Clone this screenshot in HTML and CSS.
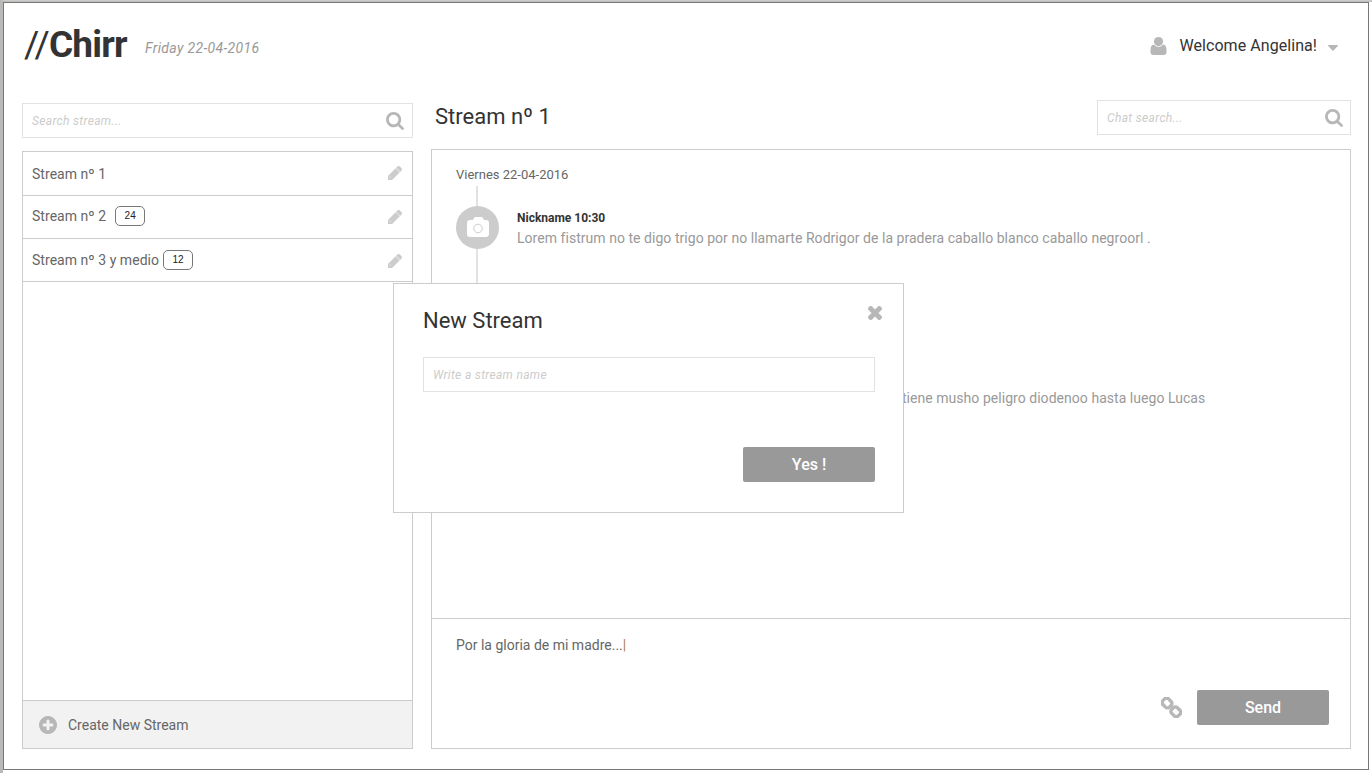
FILE: index.html
```html
<!DOCTYPE html>
<html lang="en">
<head>
<meta charset="utf-8">
<title>//Chirr</title>
<link rel="stylesheet" href="styles.css">
</head>
<body>
<svg class="sprite" width="0" height="0">
  <symbol id="search" viewBox="64 128 1664 1664"><path d="M1216 832q0-185-131.500-316.500t-316.500-131.500-316.500 131.500-131.500 316.500 131.500 316.500 316.500 131.500 316.500-131.500 131.500-316.500zm512 832q0 52-38 90t-90 38q-54 0-90-38l-343-342q-179 124-399 124-143 0-273.500-55.500t-225-150-150-225-55.500-273.500 55.500-273.500 150-225 225-150 273.500-55.500 273.500 55.500 225 150 150 225 55.500 273.500q0 220-124 399l343 343q37 37 37 90z"/></symbol>
  <symbol id="pencil" viewBox="128 149 1515 1515"><path stroke="#ccc" stroke-width="50" d="M430 1475l60-60-150-150-60 60v50h100v100zM960 416l416 416-832 832h-416v-416zm683 96q0 53-37 90l-166 166-416-416 166-165q36-38 90-38 53 0 91 38l235 234q37 39 37 91z"/></symbol>
</svg>
<div class="app">
  <header class="header">
    <h1 class="logo"><span class="slashes">//</span>Chirr</h1>
    <span class="today">Friday 22-04-2016</span>
    <div class="user">
      <svg class="user-icon" viewBox="0 0 16 18"><circle cx="8" cy="4.600" r="4.600"/><path d="M3.400 7.600Q0 8 0 13v2q0 3 3 3h10q3 0 3-3v-2q0-5-3.400-5.400Q11 10 8 10T3.400 7.600z"/></svg>
      <span class="welcome">Welcome Angelina!</span>
      <svg class="caret" viewBox="0 0 10 6"><path d="M.6 0h8.800q1 .4.400 1L5.600 5.600q-.6.500-1.200 0L.2 1Q-.4.400.6 0z"/></svg>
    </div>
  </header>
  <div class="columns">
    <aside class="sidebar">
      <div class="field stream-search"><span>Search stream...</span><svg class="search-icon"><use href="#search"/></svg></div>
      <div class="streams">
        <div class="stream first"><span>Stream nº 1</span><svg class="pencil"><use href="#pencil"/></svg></div>
        <div class="stream second"><span>Stream nº 2</span><span class="badge spaced">24</span><svg class="pencil"><use href="#pencil"/></svg></div>
        <div class="stream third"><span>Stream nº 3 y medio</span><span class="badge">12</span><svg class="pencil"><use href="#pencil"/></svg></div>
        <div class="create">
          <svg class="plus" viewBox="128 128 1536 1536"><path d="M1344 960v-128q0-26-19-45t-45-19h-256v-256q0-26-19-45t-45-19h-128q-26 0-45 19t-19 45v256h-256q-26 0-45 19t-19 45v128q0 26 19 45t45 19h256v256q0 26 19 45t45 19h128q26 0 45-19t19-45v-256h256q26 0 45-19t19-45zm320-64q0 209-103 385.500t-279.500 279.500-385.500 103-385.500-103-279.500-279.500-103-385.500 103-385.500 279.500-279.500 385.500-103 385.500 103 279.500 279.500 103 385.500z"/></svg>
          <span>Create New Stream</span>
        </div>
      </div>
    </aside>
    <main class="main">
      <div class="main-head">
        <h2 class="title">Stream nº 1</h2>
        <div class="field chat-search"><span>Chat search...</span><svg class="search-icon"><use href="#search"/></svg></div>
      </div>
      <div class="chat">
        <div class="messages">
          <div class="day">Viernes 22-04-2016</div>
          <div class="message">
            <div class="rail">
              <div class="avatar"><svg class="camera" viewBox="0 0 22 20"><path fill="#fff" d="M3 3h3l1.200-2.200Q7.700 0 8.500 0h6q.8 0 1.200.800L17 3h2q3 0 3 3v11q0 3-3 3H3q-3 0-3-3V6q0-3 3-3z"/><circle cx="11" cy="11.500" r="4.300" fill="none" stroke="#ccc" stroke-width="1"/></svg></div>
            </div>
            <div class="body">
              <div class="nick">Nickname 10:30</div>
              <p class="text">Lorem fistrum no te digo trigo por no llamarte Rodrigor de la pradera caballo blanco caballo negroorl .</p>
            </div>
          </div>
          <p class="text later">tiene musho peligro diodenoo hasta luego Lucas</p>
        </div>
        <div class="composer">
          <div class="draft">Por la gloria de mi madre...<span class="cursor">|</span></div>
          <div class="actions">
            <svg class="link" viewBox="0 0 21 21"><g fill="none" stroke="#b7b7b7" stroke-width="3.400"><rect x="-4.600" y="-4" width="9.200" height="8" rx="2.800" transform="translate(6 6) rotate(45)"/><rect x="-4.600" y="-4" width="9.200" height="8" rx="2.800" transform="translate(14.800 14.800) rotate(45)"/></g></svg>
            <button class="button">Send</button>
          </div>
        </div>
      </div>
    </main>
  </div>
</div>
<div class="dialog">
  <div class="dialog-head">
    <h2 class="title">New Stream</h2>
    <svg class="close" viewBox="302 302 1188 1188"><path stroke="#b7b7b7" stroke-width="50" d="M1490 1258q0 40-28 68l-136 136q-28 28-68 28t-68-28l-294-294-294 294q-28 28-68 28t-68-28l-136-136q-28-28-28-68t28-68l294-294-294-294q-28-28-28-68t28-68l136-136q28-28 68-28t68 28l294 294 294-294q28-28 68-28t68 28l136 136q28 28 28 68t-28 68l-294 294 294 294q28 28 28 68z"/></svg>
  </div>
  <div class="field"><span>Write a stream name</span></div>
  <button class="button">Yes !</button>
</div>
</body>
</html>
```
FILE: styles.css
```css
* { box-sizing: border-box; }
body {
  margin: 0;
  height: 773px;
  overflow: hidden;
  padding: 2px 3px 3px;
  background: linear-gradient(#b9b9b7, #b9b9b7) 0 0 / 3px 100% no-repeat,
    linear-gradient(#cfcfcd, #b9b9b7) 0 0 / 100% 2px no-repeat, #fff;
  font-family: Roboto, "Liberation Sans", sans-serif;
  font-size: 14px;
  line-height: 20px;
  color: #666;
  white-space: nowrap;
}
svg { display: block; fill: #b7b7b7; flex: none; }
.sprite { position: absolute; }
h1, h2, p { margin: 0; font-weight: 400; }
.app {
  width: 1366px;
  height: 768px;
  border: 1px solid #777;
  background: #fff;
  padding: 0 17px 20px 18px;
  display: flex;
  flex-direction: column;
}
.header { height: 97px; flex: none; display: flex; align-items: flex-start; padding: 20px 13px 0 2px; }
.logo { font-size: 37px; line-height: 44px; font-weight: 700; color: #333; letter-spacing: -.8px; width: 121px; }
.slashes { font-weight: 400; }
.today { font-style: italic; color: #999; padding-top: 15px; letter-spacing: .35px; }
.user { margin-left: auto; display: flex; align-items: center; padding-top: 13px; font-size: 16px; }
.user-icon { width: 17px; height: 18px; margin-right: 12px; }
.welcome { color: #333; letter-spacing: .06px; }
.caret { width: 10px; height: 6px; margin: 4px 0 0 11px; }
.columns { flex: 1; display: flex; gap: 18px; }
.sidebar { width: 391px; padding-top: 3px; display: flex; flex-direction: column; gap: 13px; }
.field {
  height: 35px;
  border: 1px solid #e2e2e2;
  padding: 0 7px 0 9px;
  display: flex;
  align-items: center;
  justify-content: space-between;
  color: #ccc;
  font-size: 12px;
  font-style: italic;
  letter-spacing: .33px;
}
.stream-search { padding-right: 8px; }
.search-icon { width: 18px; height: 18px; }
.streams { flex: 1; border: 1px solid #ccc; display: flex; flex-direction: column; }
.stream { height: 43px; border-bottom: 1px solid #ccc; display: flex; align-items: center; padding: 0 10px 0 9px; letter-spacing: .04px; }
.stream.first { height: 44px; }
.stream.second { padding-bottom: 2px; }
.badge {
  width: 30px;
  height: 20px;
  margin-left: 4px;
  border: 1px solid #777;
  border-radius: 5px;
  font: 10px/18px "Liberation Sans", sans-serif;
  color: #222;
  text-align: center;
}
.badge.spaced { margin-left: 9px; }
.pencil { width: 14px; height: 14px; margin-left: auto; fill: #ccc; }
.first .pencil { margin-bottom: 1px; }
.second .pencil, .third .pencil { margin-top: 2px; }
.create { height: 48px; margin-top: auto; border-top: 1px solid #ccc; background: #f2f2f2; display: flex; align-items: center; gap: 11px; padding-left: 16px; }
.plus { width: 18px; height: 18px; }
.main { width: 920px; display: flex; flex-direction: column; }
.main-head { height: 49px; display: flex; justify-content: space-between; padding-left: 4px; }
.title { font-size: 22px; line-height: 34px; color: #333; }
.chat-search { width: 254px; }
.chat { flex: 1; border: 1px solid #ccc; display: flex; flex-direction: column; }
.messages { height: 468px; padding: 15px 24px 0; }
.day { font-size: 13px; }
.message { display: flex; gap: 18px; margin-top: 1px; }
.rail { width: 43px; height: 130px; padding-top: 20px; background: linear-gradient(#e2e2e2, #e2e2e2) 20px 0 / 2px 100% no-repeat; }
.avatar { width: 43px; height: 43px; border-radius: 50%; background: #ccc; display: flex; align-items: center; justify-content: center; }
.camera { width: 22px; height: 20px; margin-bottom: 2px; }
.body { padding-top: 22px; }
.nick { font-size: 12px; font-weight: 700; color: #333; }
.text { color: #999; letter-spacing: .04px; }
.later { padding-left: 446px; margin-top: 72px; }
.composer { flex: 1; border-top: 1px solid #ccc; padding: 16px 21px 23px 24px; display: flex; flex-direction: column; justify-content: space-between; }
.cursor { color: #a87f50; }
.actions { display: flex; align-items: center; justify-content: flex-end; gap: 15px; }
.link { width: 21px; height: 21px; }
.button { width: 132px; height: 35px; border: 0; border-radius: 2px; padding: 0; background: #999; color: #fff; font: 500 16px/35px Roboto, sans-serif; }
.dialog { position: absolute; left: 393px; top: 283px; width: 511px; height: 230px; border: 1px solid #ccc; background: #fff; padding: 20px 28px 30px 29px; display: flex; flex-direction: column; }
.dialog-head { display: flex; justify-content: space-between; height: 53px; margin-right: -7px; }
.close { width: 14px; height: 14px; margin-top: 2px; }
.dialog .button { margin: auto 0 0 auto; }
```
